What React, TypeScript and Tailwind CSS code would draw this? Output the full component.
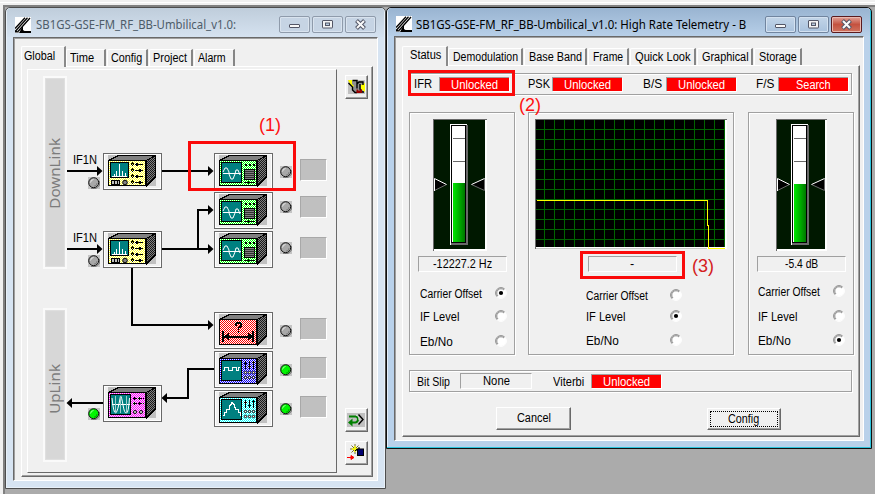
import { useLayoutEffect, useRef, useState, type ReactNode } from "react";

/* Text drawn in a fixed advance width, condensed like a bitmap dialog font. */
function T({ w, children, className = "" }: { w: number; children: string; className?: string }) {
  const ref = useRef<HTMLSpanElement>(null);
  const [scale, setScale] = useState(1);
  useLayoutEffect(() => {
    if (ref.current) setScale(w / ref.current.offsetWidth);
  }, [w, children]);
  return (
    <span className={`inline-block shrink-0 whitespace-nowrap text-left ${className}`} style={{ width: w }}>
      <span ref={ref} className="inline-block origin-left" style={{ transform: `scaleX(${scale})` }}>
        {children}
      </span>
    </span>
  );
}

function Logo() {
  return (
    <svg width="16" height="16" viewBox="0 0 16 16" className="shrink-0 bg-white">
      <path d="M0 11.500L10 .8M1 13.500L12.500 .8M3 14.500L15 1" stroke="#000" strokeWidth="1.300" />
      <path d="M0 15.500V13l2 .5L4 15.500z" fill="#000" />
      <path d="M8 8.500V13L9.500 14H16V16H4z" fill="#000" />
    </svg>
  );
}

function TitleButton({ kind, active }: { kind: "min" | "max" | "close"; active: boolean }) {
  const red = active && kind === "close";
  const look = red
    ? "border-[#5a1a1e] bg-linear-to-b from-[#e0a198] via-[#c4513f] to-[#cf7360] shadow-[inset_0_0_0_1px_#e9b9b0]"
    : active
      ? "border-[#71859f] bg-linear-to-b from-[#c3d5e8] to-[#a9c2dd] shadow-[inset_0_0_0_1px_#d3e1f0]"
      : "border-[#8f9bab] bg-[#c6d4e4] shadow-[inset_0_0_0_1px_#d9e3ee]";
  return (
    <div className={`flex h-[17px] w-[31px] items-center justify-center rounded-[2px] border ${look}`}>
      <svg width="15" height="11" viewBox="0 0 15 11">
        {kind === "min" && <rect x="2.5" y="5.5" width="10" height="3" rx=".5" fill="#f8f8f8" stroke="#535666" />}
        {kind === "max" && (
          <>
            <rect x="2.5" y="1.5" width="10" height="7.5" rx=".5" fill="#f4f4f4" stroke="#535666" />
            <rect x="5.5" y="4" width="4" height="2.5" fill="#b8cce0" stroke="#535666" />
          </>
        )}
        {kind === "close" && (
          <>
            <path d="M3.5 1.5l8 8M11.5 1.5l-8 8" stroke="#535666" strokeWidth="4" />
            <path d="M4 2l7 7M11 2l-7 7" stroke="#fafafa" strokeWidth="2" />
          </>
        )}
      </svg>
    </div>
  );
}

function TitleButtons({ active }: { active: boolean }) {
  return (
    <div className="ml-auto flex gap-[2px]">
      <TitleButton kind="min" active={active} />
      <TitleButton kind="max" active={active} />
      <TitleButton kind="close" active={active} />
    </div>
  );
}

type Tab = { label: string; w: number; tw: number };

function Tabs({ items, first, fh, pad, tabPad }: { items: Tab[]; first: Tab; fh: string; pad: string; tabPad: string }) {
  return (
    <div className={`flex items-end ${fh}`}>
      <div className={`relative z-10 -mb-px flex h-[calc(100%+1px)] shrink-0 items-center rounded-tl-[2px] border-t border-l border-r-2 border-t-white border-l-white border-r-[#8a8a8a] bg-[#f0f0f0] pb-[2px] ${pad}`} style={{ width: first.w }}>
        <T w={first.tw}>{first.label}</T>
      </div>
      {items.map((t) => (
        <div key={t.label} className={`mr-px flex h-[17px] shrink-0 items-center rounded-tl-[2px] border-t border-l border-r-2 border-t-white border-l-white border-r-[#858585] ${tabPad}`} style={{ width: t.w }}>
          <T w={t.tw}>{t.label}</T>
        </div>
      ))}
    </div>
  );
}

const raised = "border border-t-white border-l-white border-r-[#696969] border-b-[#696969] shadow-[inset_-1px_-1px_0_#a0a0a0]";

/* ---------- diagram ---------- */

type Kind = "if" | "demod" | "range" | "blue" | "cyan" | "magenta";
const faceColor: Record<Kind, string> = {
  if: "#ffff30",
  demod: "#00ff00",
  range: "#ff0000",
  blue: "#0000ff",
  cyan: "#00ffff",
  magenta: "#ff00ff",
};

function Instrument({ kind }: { kind: Kind }) {
  const wide = kind !== "if";
  const flip = kind === "range" || kind === "cyan" || kind === "magenta";
  return (
    <svg width="59" height="37" viewBox="0 0 59 37" shapeRendering="crispEdges">
      <defs>
        <pattern id={`face-${kind}`} width="2" height="2" patternUnits="userSpaceOnUse">
          <rect width="2" height="2" fill={faceColor[kind]} />
          <path d={flip ? "M1 0h1v1h-1zM0 1h1v1h-1z" : "M0 0h1v1h-1zM1 1h1v1h-1z"} fill={kind === "blue" || kind === "magenta" ? "#f4e4f4" : "#fff"} />
        </pattern>
        <pattern id={`side-${kind}`} width="2" height="2" patternUnits="userSpaceOnUse">
          <rect width="2" height="2" fill="#808080" />
          <path d="M0 0h1v1h-1zM1 1h1v1h-1z" fill="#181818" />
        </pattern>
      </defs>
      <rect x=".5" y=".5" width="58" height="36" fill="#fff" stroke="#696969" />
      <rect x="2" y="2" width="55" height="33" fill="#f0f0f0" />
      <rect x="5" y="2" width="48" height="31" fill="#c0c0c0" />
      <path d="M5.5 7.5L15.5 2.5H53L43 7.5z" fill="#808080" stroke="#000" />
      <path d="M43 7.5L52.5 2.5V24L43 33.5z" fill={`url(#side-${kind})`} stroke="#000" />
      <rect x="5.5" y="7.5" width="37" height="25" fill={`url(#face-${kind})`} stroke="#000" />
      {kind === "if" && (
        <>
          <rect x="7.5" y="9.5" width="18" height="15" rx="1" fill="#008080" stroke="#000" />
          <path d="M9 23.5h15M11.5 23v-2M13.5 23v-5M16.5 23V11M19.5 23v-5M22.5 23v-3" stroke="#fff" />
          <path d="M8.500 27.500h8v4h-8zM11.500 28v4M14.500 28v4" fill="#c0c0c0" stroke="#000" />
          <circle cx="22" cy="29.500" r="2.300" fill="#808080" stroke="#000" shapeRendering="auto" />
          {[11, 17, 23, 29].map((y, i) => (
            <g key={y}>
              <path d={`M29 ${y - 2}l2 2-2 2-2-2z`} fill="#000" />
              <rect x="28.500" y={y - 0.5} width="1" height="1" fill="#ff0" />
              <path d={`M32 ${y + 0.5}h8`} stroke="#000" />
              <path d={`M${i % 2 ? 36 : 33} ${y - 1}h2v3h-2z`} fill="#000" />
            </g>
          ))}
        </>
      )}
      {wide && kind !== "range" && <rect x="7.5" y="9.5" width="20" height="20" rx="1" fill="#008080" stroke="#000" />}
      {kind === "demod" && (
        <>
          <path d="M9 20.500h18" stroke="#fff" />
          <path d="M9 19l2-4h2l2 4 0 2 2 5h2l2-5 1-4h2l2 5" fill="none" stroke="#fff" shapeRendering="auto" />
          <path d="M31 12h2M35 12h2M39 12h2" stroke="#000" strokeWidth="2" />
          <rect x="30.500" y="16.500" width="10" height="10" fill="#808080" stroke="#000" />
          <path d="M31 18.500h10M31 20.500h10M31 22.500h10M31 24.500h10" stroke="#303030" />
          <path d="M30 29.500h11M34.500 28v3" stroke="#000" />
        </>
      )}
      {kind === "range" && (
        <>
          <path d="M9 19v11M39 19v11M10 24.500h29" stroke="#000" strokeWidth="2" />
          <path d="M10 24.500l5-4v8zM39 24.500l-5-4v8z" fill="#000" />
          <path d="M22 14v-2l1-1h3l1 1v2l-2.500 2v2M24.500 18.500v2" fill="none" stroke="#000" strokeWidth="1.800" />
        </>
      )}
      {(kind === "blue" || kind === "cyan") && (
        <>
          {kind === "blue" ? (
            <path d="M9 19.500h1v-3h4v3h4v-3h4v3h2v-3h2" fill="none" stroke="#fff" />
          ) : (
            <path d="M9 25.500h1v-3h2v-3h3v-3l2-2 1-2 2 2 1 3v2h3v3h2v3" fill="none" stroke="#fff" />
          )}
          <path d="M31.500 10v8M35.500 10v8M39.500 10v8M30 12.500h3M34 15.500h3M38 11.500h3" stroke="#000" />
          {[21, 26].map((y) => [31, 35, 39].map((x) => <circle key={`${x}-${y}`} cx={x + 0.5} cy={y + 0.5} r="1.200" fill="#fff" stroke="#000" shapeRendering="auto" />))}
        </>
      )}
      {kind === "magenta" && (
        <>
          <path d="M9 19.500h18" stroke="#fff" />
          <path d="M9 13Q10.500 28 12.500 28T17.500 11Q18.500 11 20 20T23.500 28Q25.500 28 26.500 13" fill="none" stroke="#fff" shapeRendering="auto" />
          <path d="M12.500 11v17M17.500 11v17M23.500 11v17" stroke="#9fcfcf" />
          <path d="M30 13.500h11M31.500 12v3M36.500 12v3M30 18.500h11M31.500 17v3M36.500 17v3" stroke="#000" strokeDasharray="4 1" />
          <circle cx="32" cy="27" r="1.500" fill="#fff" stroke="#000" shapeRendering="auto" />
          <circle cx="38" cy="27" r="1.500" fill="#fff" stroke="#000" shapeRendering="auto" />
        </>
      )}
    </svg>
  );
}

function Led({ on }: { on?: boolean }) {
  return (
    <svg width="12" height="12" viewBox="0 0 12 12">
      <rect width="12" height="12" fill="#c4c4c4" />
      <path d="M3 11.500h5l3.500-3V4" fill="none" stroke="#808080" />
      <circle cx="5.700" cy="5.700" r="5" fill={on ? "#00f400" : "#a8a8a8"} stroke="#101010" />
      <path d="M2.500 5.500Q3 2.700 5.500 2.500" fill="none" stroke={on ? "#9fff9f" : "#e8e8e8"} />
      <path d="M9 6Q9 9 6 9.200" fill="none" stroke={on ? "#00a000" : "#808080"} />
    </svg>
  );
}

const nodes: { x: number; y: number; kind: Kind }[] = [
  { x: 103, y: 153, kind: "if" },
  { x: 103, y: 231, kind: "if" },
  { x: 214, y: 153, kind: "demod" },
  { x: 214, y: 192, kind: "demod" },
  { x: 214, y: 231, kind: "demod" },
  { x: 214, y: 312, kind: "range" },
  { x: 214, y: 351, kind: "blue" },
  { x: 214, y: 390, kind: "cyan" },
  { x: 103, y: 385, kind: "magenta" },
];
const leds: [number, number, boolean][] = [
  [280, 166, false], [280, 201, false], [280, 242, false], [280, 325, false], [280, 364, true], [280, 403, true],
  [88, 177, false], [88, 255, false], [88, 408, true],
];
const squares = [159, 196, 237, 318, 357, 396];

/* Places a child on the diagram canvas, whose origin is (28, 70). */
function At({ x, y, children }: { x: number; y: number; children: ReactNode }) {
  return (
    <div className="absolute flex" style={{ left: x - 28, top: y - 70 }}>
      {children}
    </div>
  );
}

function LinkBar({ label, h, pad }: { label: string; h: number; pad: string }) {
  return (
    <div className={`flex w-[24px] items-end justify-center border-2 border-[#fafafa] bg-[#d7d7d7] pr-[2px] shadow-[inset_0_0_1px_1px_#e0e0e0] ${pad}`} style={{ height: h }}>
      <span className="rotate-180 font-['Noto_Sans','Open_Sans',sans-serif] text-[15.2px] leading-[20px] text-[#7c7c7c] [writing-mode:vertical-rl]">{label}</span>
    </div>
  );
}

function Diagram() {
  return (
    <div className="relative h-[404px] w-[310px] border border-t-white border-l-white border-r-[#696969] border-b-[#696969]">
      <At x={43} y={76}><LinkBar label="DownLink" h={193} pad="pb-[58px]" /></At>
      <At x={43} y={308}><LinkBar label="UpLink" h={154} pad="pb-[46px]" /></At>
      <svg className="absolute top-0 left-0" width="308" height="402" viewBox="28 70 308 402">
        <g fill="none" stroke="#000" strokeWidth="2" shapeRendering="crispEdges">
          <path d="M67 171H100M162 171H210M67 249H100M162 249H210M198 249V210H210M132 268V325H210M214 369H188V398H165M103 403H70" />
        </g>
        <path d="M97 166l5.500 5-5.500 5zM208 166l5.500 5-5.500 5zM97 244l5.500 5-5.500 5zM208 244l5.500 5-5.500 5zM208 205l5.500 5-5.500 5zM208 320l5.500 5-5.500 5zM167 393l-5.500 5 5.500 5zM72 398l-5.500 5 5.500 5z" />
      </svg>
      <At x={73} y={151}><T w={24} className="leading-[18px]">IF1N</T></At>
      <At x={73} y={229}><T w={24} className="leading-[18px]">IF1N</T></At>
      {nodes.map((n) => (
        <At key={`${n.x}-${n.y}`} x={n.x} y={n.y}><Instrument kind={n.kind} /></At>
      ))}
      {leds.map(([x, y, on]) => (
        <At key={`${x}-${y}`} x={x} y={y}><Led on={on} /></At>
      ))}
      {squares.map((y) => (
        <At key={y} x={300} y={y}><div className="h-[22px] w-[27px] border border-t-[#a8a8a8] border-l-[#a8a8a8] border-r-white border-b-white bg-[#c0c0c0]" /></At>
      ))}
    </div>
  );
}

function ToolButton({ children }: { children: ReactNode }) {
  return <div className={`flex h-[24px] w-[23px] items-center justify-center bg-[#f0f0f0] ${raised}`}>{children}</div>;
}

function GlobalWindow() {
  return (
    <div className="absolute top-[7px] left-[5px] flex h-[482px] w-[381px] flex-col rounded-t-[5px] border border-[#4d4d4d] bg-[#d7e4f2] px-[7px] pb-[7px] shadow-[inset_0_0_0_1px_#e8f0f8]">
      <div className="-mx-[6px] flex h-[29px] shrink-0 items-center rounded-t-[4px] bg-linear-to-b from-[#bfcddb] to-[#d5e2f0] pr-[8px] pl-[8px] pt-[4px]">
        <Logo />
        <T w={200} className="ml-[5px] font-['Noto_Sans','Open_Sans',sans-serif] text-[12px] text-[#4e5c69]">SB1GS-GSE-FM_RF_BB-Umbilical_v1.0:</T>
        <TitleButtons active={false} />
      </div>
      <div className="flex flex-1 flex-col border border-t-[#696969] border-l-[#696969] border-r-white border-b-white bg-[#f0f0f0] pt-[8px] pr-[4px] pb-[3px] pl-[7px] shadow-[inset_1px_1px_0_#a0a0a0]">
        <Tabs fh="h-[20px]" pad="pl-[2px]" tabPad="pl-[3px]" first={{ label: "Global", w: 45, tw: 31 }} items={[
          { label: "Time", w: 40, tw: 24 },
          { label: "Config", w: 41, tw: 31 },
          { label: "Project", w: 44, tw: 34 },
          { label: "Alarm", w: 41, tw: 28 },
        ]} />
        <div className="flex flex-1 border border-t-white border-l-white border-r-[#696969] border-b-[#696969] pt-[2px] pl-[5px] shadow-[inset_-1px_-1px_0_#a0a0a0]">
          <Diagram />
          <div className="flex flex-col pt-[6px] pl-[8px]">
            <ToolButton>
              <svg width="19" height="16" viewBox="0 0 19 16">
                <rect x="1" y="1" width="17" height="14" fill="#c0c0c0" />
                <path d="M5 2h5v3l2-3h4v9l-1 2H8l-3-2z" fill="#909090" />
                <path d="M1 1h4v4l2 2-2 2zM14 6l4-2v9l-4-3z" fill="#ff0" />
                <path d="M1.500 4l4 4v3l2.500 2.500h2M5.500 1.500h4.500v8M10 5l2-2h4v3M13 5v5l2 3h2" fill="none" stroke="#000" strokeWidth="1.400" />
                <path d="M9.500 10.500h1.500v1h2v-1h2v3.500h-5.500z" fill="#900" />
              </svg>
            </ToolButton>
            <div className="mt-[309px]">
              <ToolButton>
                <svg width="19" height="16" viewBox="0 0 19 16">
                  <rect x="0" y="1" width="18" height="14" fill="#c0c0c0" />
                  <path d="M2 4.500h6.500q2.500 0 2.500 2.750T8.500 10.500H5" fill="none" stroke="#008000" strokeWidth="2" />
                  <path d="M1 10.500l4.500-4v8z" fill="#008000" />
                  <path d="M9 3q3.500 1 3 5" fill="none" stroke="#fff" strokeWidth=".7" />
                  <path d="M11.500 2.500l4.500 5-4.500 5" fill="none" stroke="#000" strokeWidth="1.400" />
                </svg>
              </ToolButton>
            </div>
            <div className="mt-[9px]">
              <ToolButton>
                <svg width="19" height="18" viewBox="0 0 19 18">
                  <path d="M8 0v10M3 5h10M4.500 1.500l7 7M11.500 1.500l-7 7" stroke="#77702a" />
                  <path d="M8 2v6M5 5h6" stroke="#ff0" strokeWidth="1.500" />
                  <rect x="10.500" y="5" width="6" height="6.500" fill="#000070" stroke="#000" />
                  <path d="M12 3v2M10 5l-2 2" stroke="#000" />
                  <path d="M0 13.500h5M4 11.500l3 2-3 2z" fill="red" stroke="red" strokeWidth="1" />
                </svg>
              </ToolButton>
            </div>
          </div>
        </div>
      </div>
    </div>
  );
}

/* ---------- telemetry window ---------- */

const etched = "border border-[#a0a0a0] shadow-[1px_1px_0_#fff,inset_1px_1px_0_#fff]";
const sunken = "border border-t-[#a0a0a0] border-l-[#a0a0a0] border-r-white border-b-white";

function RedFlag({ children, tw }: { children: string; tw: number }) {
  return (
    <div className="flex h-[14px] w-[70px] shrink-0 items-center justify-center border-t border-l border-[#a0a0a0] bg-[#ff0000] leading-[14px] text-white shadow-[1px_1px_0_#fff]">
      <T w={tw}>{children}</T>
    </div>
  );
}

function Gauge({ w, fill, tube }: { w: number; fill: number; tube: number }) {
  const id = `bar-${w}`;
  return (
    <svg width={w} height="132" viewBox={`0 0 ${w} 132`} shapeRendering="crispEdges">
      <defs>
        <linearGradient id={id}>
          <stop offset="0" stopColor="#00e800" />
          <stop offset="1" stopColor="#007800" />
        </linearGradient>
      </defs>
      <rect width={w} height="132" fill="#fff" />
      <path d={`M0 132V0H${w}V1H1V132z`} fill="#696969" />
      <rect x="1" y="1" width={w - 3} height="129" fill="#001800" />
      <rect x={tube} y="5" width="17" height="121" fill="#fff" />
      <rect x={tube + 1} y="6" width="17" height="120" fill="#696969" />
      <rect x={tube + 1} y="6" width="15" height="118" fill="#000" />
      <rect x={tube + 2} y="7" width="13" height="116" fill="#fff" />
      <rect x={tube + 3} y={fill} width="12" height={123 - fill} fill={`url(#${id})`} />
      <path d={`M${tube + 3} 19.500h12M${tube + 3} 42.500h12`} stroke="#696969" />
      <g shapeRendering="auto">
        <path d="M1.500 59.500v12l12-6z" fill="#000" />
        <path d="M13.500 65.500l-12 6" stroke="#696969" />
        <path d="M1.500 72V59.500l12 6" fill="none" stroke="#fff" />
        <path d={`M${w - 15.500} 65.500l13 6V59.500`} fill="#000" stroke="#696969" />
        <path d={`M${w - 2.500} 59.500l-13 6`} stroke="#fff" />
      </g>
    </svg>
  );
}

function Graph() {
  const xs = Array.from({ length: 19 }, (_, i) => 9.5 + i * 10);
  const ys = Array.from({ length: 12 }, (_, i) => 10.5 + i * 10);
  return (
    <svg width="192" height="130" viewBox="0 0 192 130" shapeRendering="crispEdges">
      <rect width="192" height="130" fill="#fff" />
      <path d="M0 130V0H192V1H1V130z" fill="#696969" />
      <rect x="1" y="1" width="189" height="127" fill="#000" />
      {xs.map((x) => <path key={x} d={`M${x} 1V128`} stroke="#006400" />)}
      {ys.map((y) => <path key={y} d={`M1 ${y}H190`} stroke="#006400" />)}
      <path d="M1 129.500H172" stroke="#c8c8c8" />
      <path d="M2 81.500H172.500V106H173.500V129.500H190" fill="none" stroke="#ff0" />
    </svg>
  );
}

function Radio({ on }: { on: boolean }) {
  return (
    <svg width="12" height="12" viewBox="0 0 12 12" className="shrink-0">
      <circle cx="6" cy="6" r="5" fill="#fff" />
      <path d="M2.200 9.800A5.300 5.300 0 0 1 9.800 2.200" fill="none" stroke="#888" />
      <path d="M3 9A4.200 4.200 0 0 1 9 3" fill="none" stroke="#707070" strokeWidth=".8" />
      <path d="M9.800 2.200A5.300 5.300 0 0 1 2.200 9.800" fill="none" stroke="#fff" />
      {on && <circle cx="6" cy="6" r="2.100" fill="#000" />}
    </svg>
  );
}

function Option({ label, tw, on, cls }: { label: string; tw: number; on: boolean; cls: string }) {
  return (
    <div className={`flex items-center justify-between ${cls}`}>
      <T w={tw} className="pt-[2px] leading-[15px]">{label}</T>
      <Radio on={on} />
    </div>
  );
}

function Group({ width, shift = "", vshift = "", value, vw, optCls, rows, selected, children }: {
  width: string; shift?: string; vshift?: string; value: string; vw: number; optCls: string; rows: string[]; selected: number; children: ReactNode;
}) {
  return (
    <div className={`flex h-[243px] shrink-0 flex-col items-center ${width} ${etched}`}>
      <div className={`mt-[6px] flex h-[132px] shrink-0 ${shift}`}>{children}</div>
      <div className={`mt-[5px] flex h-[16px] w-[89px] shrink-0 items-center justify-center leading-[15px] ${vshift} ${sunken}`}>
        <T w={vw}>{value}</T>
      </div>
      <div className={`flex flex-col self-stretch ${optCls}`}>
        <Option cls={rows[0]} label="Carrier Offset" tw={62} on={selected === 0} />
        <Option cls={rows[1]} label="IF Level" tw={39} on={selected === 1} />
        <Option cls={rows[2]} label="Eb/No" tw={33} on={selected === 2} />
      </div>
    </div>
  );
}

function TelemetryWindow() {
  return (
    <div className="absolute top-[7px] left-[386px] flex h-[442px] w-[486px] flex-col rounded-t-[5px] border border-[#101010] bg-[#b9d1ea] px-[7px] pb-[7px] shadow-[inset_-1px_-1px_0_#2cc4dc,inset_1px_1px_0_#e4eefa]">
      <div className="-mx-[6px] flex h-[28px] shrink-0 items-center rounded-t-[4px] bg-linear-to-b from-[#99b4d1] to-[#b7cfe8] pr-[8px] pl-[8px] pt-[4px]">
        <Logo />
        <T w={330} className="ml-[4px] font-['Noto_Sans','Open_Sans',sans-serif] text-[12px]">SB1GS-GSE-FM_RF_BB-Umbilical_v1.0: High Rate Telemetry - B</T>
        <TitleButtons active />
      </div>
      <div className="flex flex-1 flex-col border border-t-[#696969] border-l-[#696969] border-r-white border-b-white bg-[#f0f0f0] pt-[9px] pr-[3px] pb-[3px] pl-[7px] shadow-[inset_1px_1px_0_#a0a0a0]">
        <Tabs fh="h-[19px]" pad="pl-[7px]" tabPad="pl-[4px]" first={{ label: "Status", w: 46, tw: 31 }} items={[
          { label: "Demodulation", w: 75, tw: 65 },
          { label: "Base Band", w: 63, tw: 53 },
          { label: "Frame", w: 41, tw: 30 },
          { label: "Quick Look", w: 66, tw: 56 },
          { label: "Graphical", w: 56, tw: 47 },
          { label: "Storage", w: 48, tw: 38 },
        ]} />
        <div className="flex flex-1 flex-col border border-t-white border-l-white border-r-[#696969] border-b-[#696969] pt-[7px] pl-[6px] shadow-[inset_-1px_-1px_0_#a0a0a0]">
          <div className={`flex h-[22px] w-[443px] shrink-0 items-center pl-[4px] ${etched}`}>
            <T w={18} className="mr-[7px]">IFR</T>
            <RedFlag tw={47}>Unlocked</RedFlag>
            <T w={22} className="mr-[2px] ml-[19px]">PSK</T>
            <RedFlag tw={47}>Unlocked</RedFlag>
            <T w={19} className="mr-[4px] ml-[21px]">B/S</T>
            <RedFlag tw={47}>Unlocked</RedFlag>
            <T w={18} className="mr-[4px] ml-[20px]">F/S</T>
            <RedFlag tw={35}>Search</RedFlag>
          </div>
          <div className="mt-[17px] flex shrink-0">
            <Group width="w-[106px]" shift="mr-[4px]" value="-12227.2 Hz" vw={59} optCls="pl-[10px] pr-[7px] pt-[13px]" rows={["h-[16px]", "h-[16px] mt-[7px]", "h-[16px] mt-[9px]"]} selected={0}>
              <Gauge w={54} fill={64} tube={17} />
            </Group>
            <div className="w-[13px]" />
            <Group width="w-[206px]" vshift="ml-[2px]" value="-" vw={4} optCls="pl-[57px] pr-[51px] pt-[15px]" rows={["h-[16px]", "h-[16px] mt-[5px]", "h-[16px] mt-[8px]"]} selected={1}>
              <Graph />
            </Group>
            <div className="w-[14px]" />
            <Group width="w-[106px]" shift="ml-px" value="-5.4 dB" vw={33} optCls="pl-[9px] pr-[8px] pt-[11px]" rows={["h-[16px]", "h-[16px] mt-[9px]", "h-[16px] mt-[8px]"]} selected={2}>
              <Gauge w={51} fill={65} tube={15} />
            </Group>
          </div>
          <div className={`mt-[15px] flex h-[22px] w-[443px] shrink-0 items-center pl-[7px] ${etched}`}>
            <T w={33} className="pt-[2px]">Bit Slip</T>
            <div className={`ml-[10px] flex h-[16px] w-[72px] items-center justify-center leading-[14px] ${sunken}`}>
              <T w={27}>None</T>
            </div>
            <T w={31} className="mr-[7px] ml-[21px] pt-[2px]">Viterbi</T>
            <RedFlag tw={47}>Unlocked</RedFlag>
          </div>
          <div className="mt-[15px] flex items-start pl-[87px]">
            <div className={`flex h-[23px] w-[75px] items-center justify-center ${raised}`}>
              <T w={34}>Cancel</T>
            </div>
            <div className={`mt-px ml-[136px] flex h-[22px] w-[74px] p-[2px] ${raised}`}>
              <div className="flex flex-1 items-center justify-center border border-dotted border-black pr-px">
                <T w={31}>Config</T>
              </div>
            </div>
          </div>
        </div>
      </div>
    </div>
  );
}

export default function App() {
  return (
    <div className="flex h-[494px] w-[875px] overflow-hidden bg-[#f0f0f0] pt-[5px] pl-[3px] font-['Liberation_Sans',Arial,sans-serif] text-[12.5px] leading-[15px] text-black shadow-[inset_0_2px_0_#f0f0f0,inset_0_3px_0_#fff]">
      <div className="flex-1 border-t-2 border-l-2 border-[#808080] bg-[#ababab]" />
      <GlobalWindow />
      <TelemetryWindow />

      <div className="absolute top-[141px] left-[188px] h-[50px] w-[108px] border-3 border-[#fa0a0a]" />
      <div className="absolute top-[70px] left-[408px] h-[26px] w-[107px] border-3 border-[#fa0a0a]" />
      <div className="absolute top-[251px] left-[580px] h-[28px] w-[105px] border-3 border-[#fa0a0a]" />
      <div className="absolute top-[115px] left-[259px] text-[18px] leading-[20px] text-[#ff1010]">(1)</div>
      <div className="absolute top-[95px] left-[519px] text-[18px] leading-[20px] text-[#ff1010]">(2)</div>
      <div className="absolute top-[256px] left-[692px] text-[18px] leading-[20px] text-[#d42020]">(3)</div>
    </div>
  );
}
